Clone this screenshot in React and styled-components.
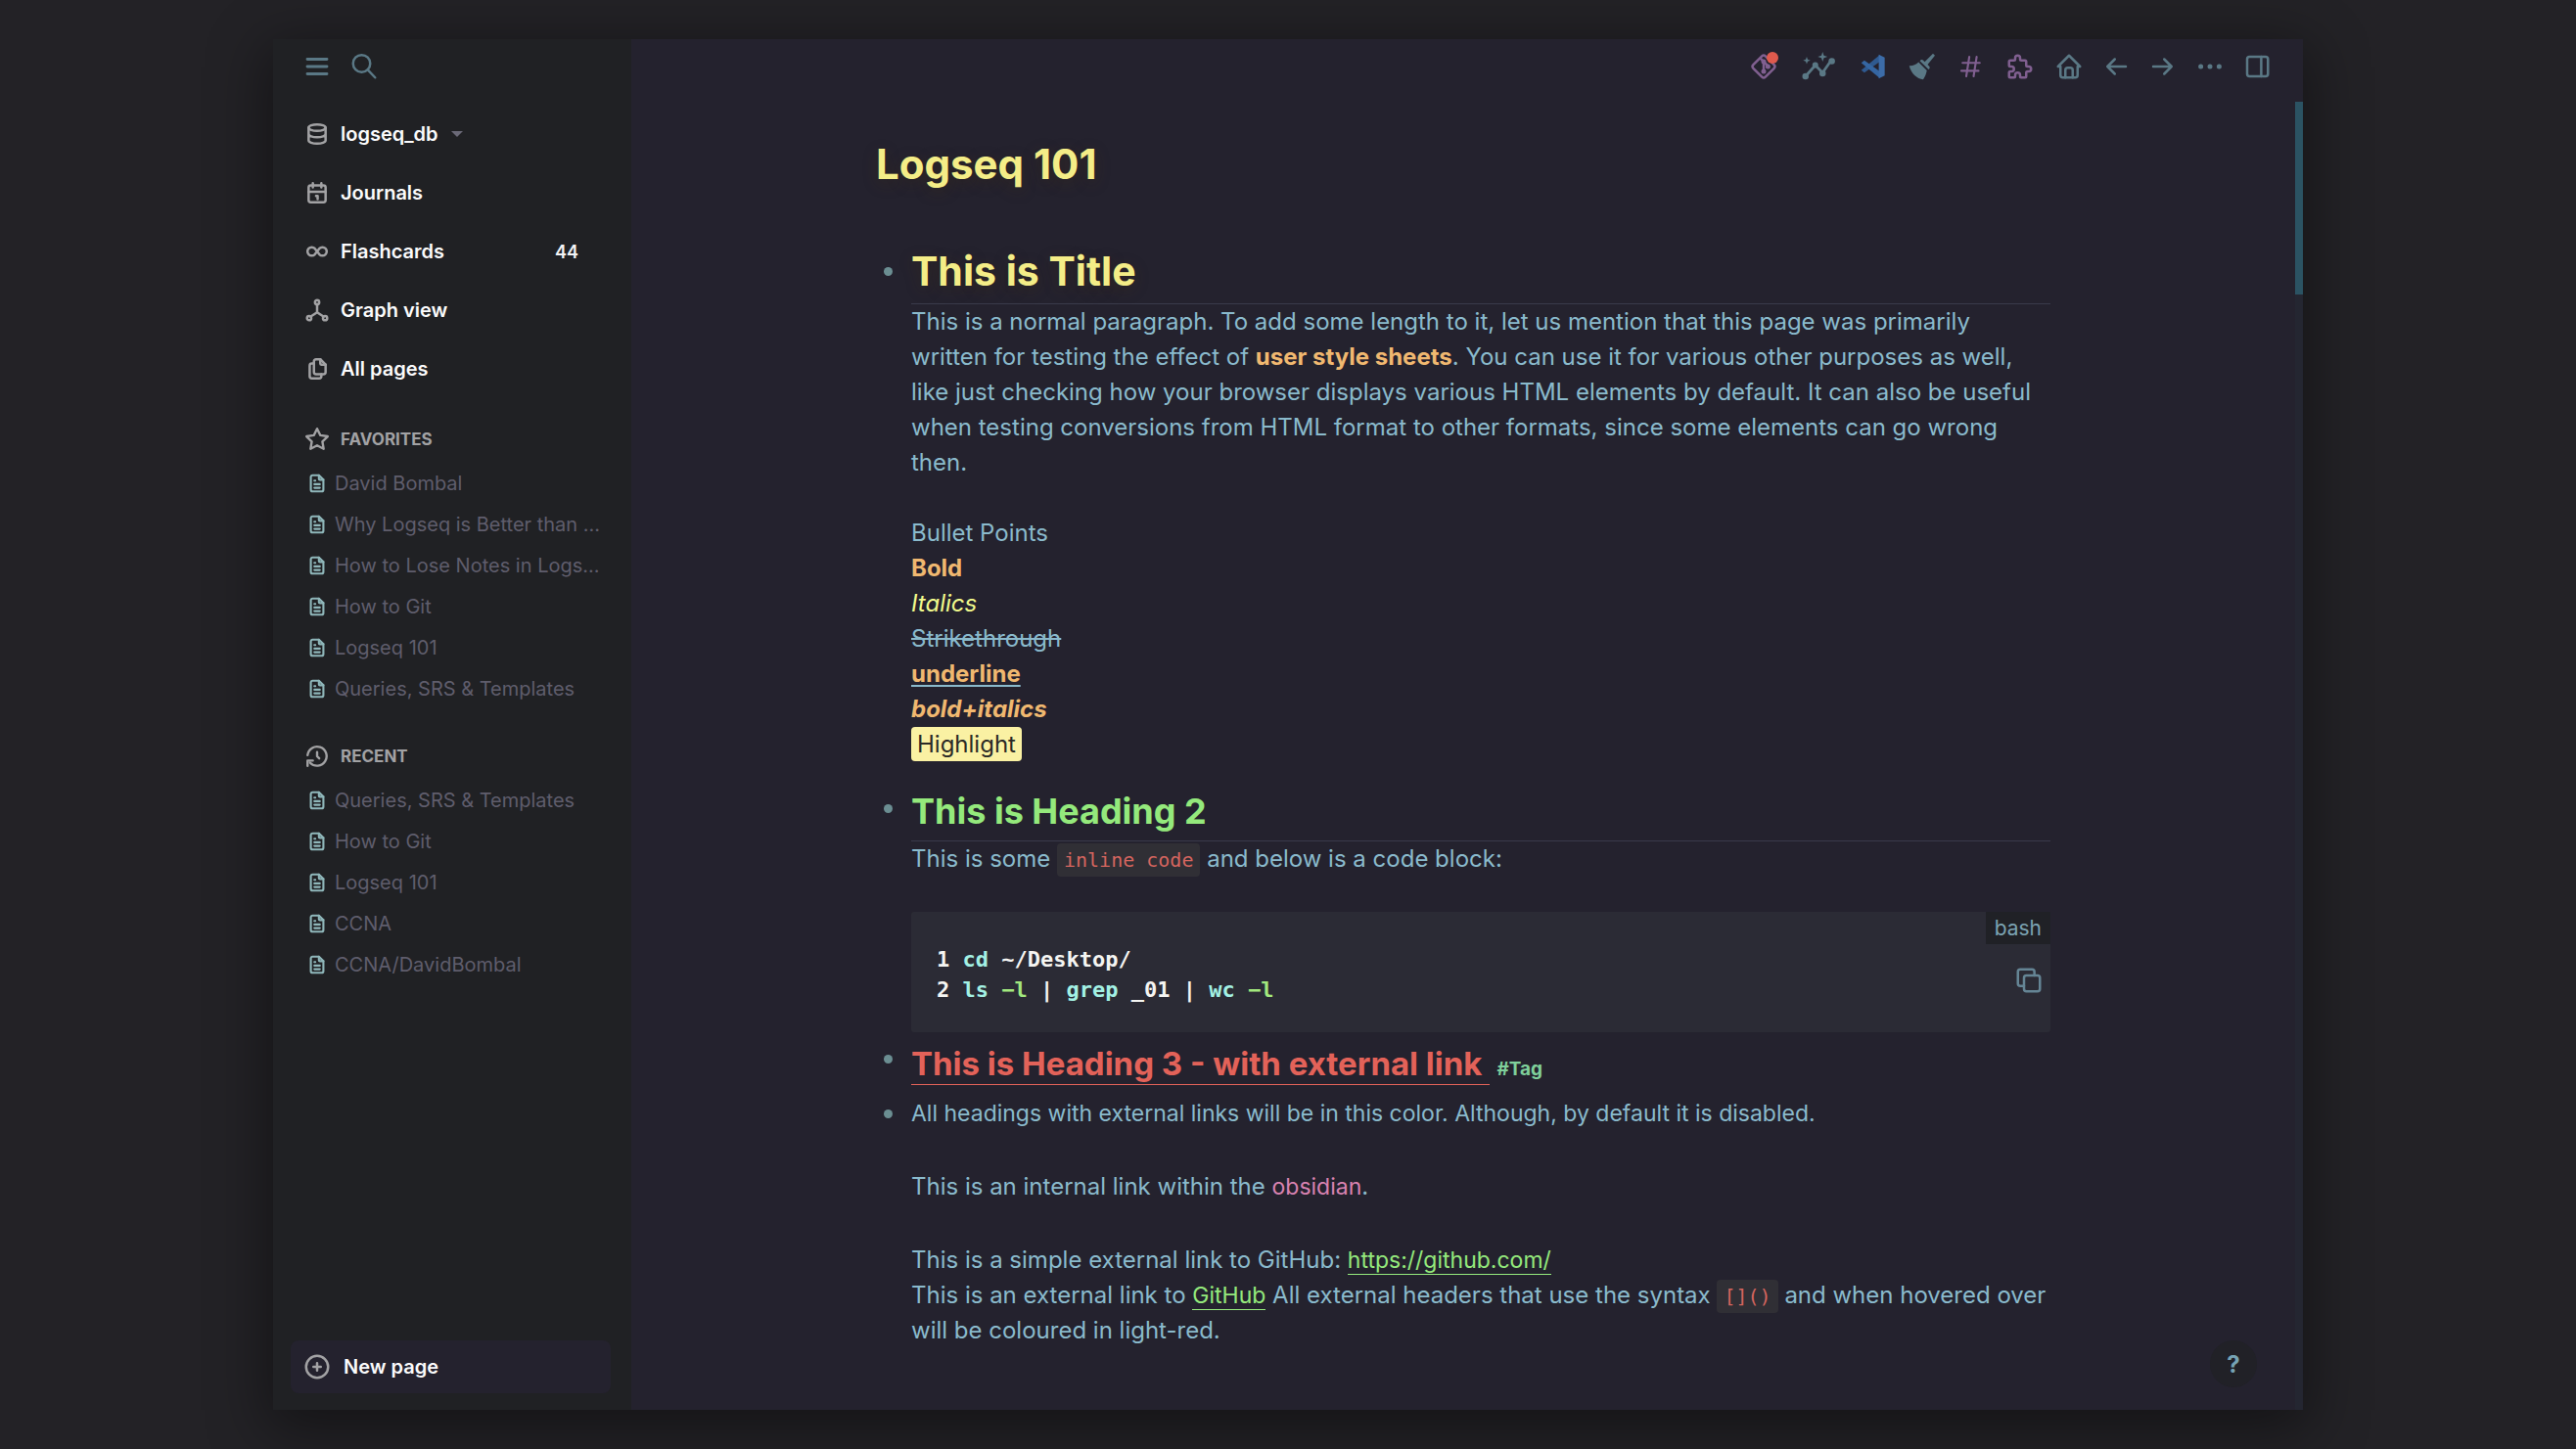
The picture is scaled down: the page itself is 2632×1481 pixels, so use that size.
import React from 'react';
import styled, { createGlobalStyle, css } from 'styled-components';

const c = {
  desk: '#232226',
  side: '#202124',
  main: '#24222e',
  text: '#8abacc',
  icon: '#5a7885',
  purple: '#805f90',
  muted: '#5f5d6c',
  grey: '#a2a2a4',
  yellow: '#f4ed87',
  orange: '#f0b870',
  green: '#94e97c',
  red: '#e36259',
};

const sans = `Inter, 'Liberation Sans', sans-serif`;
const mono = `'DejaVu Sans Mono', 'Liberation Mono', monospace`;

const Global = createGlobalStyle`
  *, *::before, *::after { box-sizing: border-box; }
  body { margin: 0; background: ${c.desk}; font-family: ${sans}; color: ${c.text}; }
  button { font: inherit; color: inherit; background: none; border: 0; padding: 0; cursor: pointer; }
  a { color: inherit; text-decoration: none; }
  h1, h2, h3, p, ul, pre { margin: 0; padding: 0; }
  ul { list-style: none; }
`;

const Desk = styled.div`
  min-height: 100vh;
  display: flex;
  padding: 40px 279px;
`;

const Window = styled.div`
  flex: 1;
  min-width: 0;
  display: flex;
  background: ${c.main};
  box-shadow: 0 14px 56px 6px rgba(0, 0, 0, 0.42);
`;

/* ---------- icons ---------- */

const Svg = styled.svg`
  display: block;
  flex: none;
  width: ${(p) => p.$w || p.$size}px;
  height: ${(p) => p.$size}px;
  fill: none;
  stroke: currentColor;
  stroke-width: ${(p) => p.$stroke || 2};
  stroke-linecap: round;
  stroke-linejoin: round;
`;

const shapes = {
  menu: <path d="M4 6h16M4 12h16M4 18h16" />,
  search: <><circle cx="10" cy="9.5" r="7" /><path d="M21 21l-6-6.300" /></>,
  database: <><ellipse cx="12" cy="6" rx="8" ry="3" /><path d="M4 6v6c0 1.660 3.600 3 8 3s8-1.340 8-3V6M4 12v6c0 1.660 3.600 3 8 3s8-1.340 8-3v-6" /></>,
  calendar: <><rect x="4" y="5" width="16" height="16" rx="2" /><path d="M16 3v4M8 3v4M4 11h16M11 15h1.500v3" /></>,
  infinity: <path d="M9.800 9.200a4 4 0 1 0 0 5.600L12 12l2.200-2.800a4 4 0 1 1 0 5.600L12 12 9.800 9.200" />,
  graph: <><circle cx="12" cy="4.500" r="2" /><circle cx="4.500" cy="19.500" r="2" /><circle cx="19.500" cy="19.500" r="2" /><path d="M6 18l6-4 6 4M12 6.500V14" /></>,
  files: <><path d="M15 3v4a1 1 0 0 0 1 1h4" /><path d="M18 17h-7a2 2 0 0 1-2-2V5a2 2 0 0 1 2-2h4l5 5v7a2 2 0 0 1-2 2z" /><path d="M16 17v2a2 2 0 0 1-2 2H7a2 2 0 0 1-2-2V9a2 2 0 0 1 2-2h2" /></>,
  star: <path d="M12 17.750l-6.172 3.245 1.179-6.873-5-4.867 6.900-1L11.993 2l3.086 6.253 6.900 1-5 4.867 1.179 6.873z" />,
  history: <><path d="M12 8v4l2 2" /><path d="M3 11a9 9 0 1 1 2.500 7.200M3 21v-5h5" /></>,
  file: <><path d="M14 3v4a1 1 0 0 0 1 1h4" /><path d="M17 21H7a2 2 0 0 1-2-2V5a2 2 0 0 1 2-2h7l5 5v11a2 2 0 0 1-2 2zM9 9h1M9 13h6M9 17h6" /></>,
  plus: <><circle cx="12" cy="12" r="9" /><path d="M9 12h6M12 9v6" /></>,
  git: (
    <>
      <rect x="5" y="5" width="14" height="14" rx="2" transform="rotate(45 12 12)" />
      <path d="M12 8v8M9.500 5.500L12 8l3.500 3.500" />
      <circle cx="12" cy="8" r="1" /><circle cx="12" cy="16" r="1" /><circle cx="15.500" cy="12" r="1" />
    </>
  ),
  insights: (
    <>
      <path d="M3 20l8-9 6 6 7-10" strokeWidth="2.2" />
      <g fill="currentColor" stroke="none">
        <circle cx="3" cy="20" r="2.600" /><circle cx="11" cy="10.800" r="2.400" />
        <circle cx="17" cy="17.500" r="2.600" /><circle cx="24.500" cy="7.500" r="2.600" />
        <path d="M17 0l1 3 3 1-3 1-1 3-1-3-3-1 3-1zM4 4l.8 2.200L7 7l-2.200.8L4 10l-.8-2.200L1 7l2.200-.8z" />
      </g>
    </>
  ),
  vscode: (
    <g stroke="none">
      <path fill="#2f5a90" d="M17.500 2v6L4.200 17.300 1.500 15.200z" />
      <path fill="#3566a2" d="M17.500 22v-6L4.200 6.700 1.500 8.800z" />
      <path fill="#3c6ca8" d="M16.800 1.500L22 4v16l-5.200 2.500z" />
    </g>
  ),
  broom: (
    <g fill="currentColor" stroke="none">
      <path d="M20.800 1.400l1.600 1.500-6 7.500 1.300 1.300c.6.600.6 1.400.1 2l-.6.700-7.200-7 .7-.7c.6-.5 1.400-.5 2 .1l1.300 1.300z" />
      <path d="M9 8.400l6.800 6.800c-.6 3-1.400 5-3 7.400-5-.5-10-5-11.400-11.200 3 .2 5.200-.8 7.600-3z" />
    </g>
  ),
  hash: <path d="M5 9h14M4 15.500h14M10.500 4L8 20M16.500 4L14 20" strokeWidth="1.700" />,
  puzzle: <path d="M4 7h3a1 1 0 0 0 1-1V5a2 2 0 0 1 4 0v1a1 1 0 0 0 1 1h3a1 1 0 0 1 1 1v3a1 1 0 0 0 1 1h1a2 2 0 0 1 0 4h-1a1 1 0 0 0-1 1v3a1 1 0 0 1-1 1h-3a1 1 0 0 1-1-1v-1a2 2 0 0 0-4 0v1a1 1 0 0 1-1 1H4a1 1 0 0 1-1-1v-3a1 1 0 0 1 1-1h1a2 2 0 0 0 0-4H4a1 1 0 0 1-1-1V8a1 1 0 0 1 1-1" />,
  home: <><path d="M5 12H3l9-9 9 9h-2v7a2 2 0 0 1-2 2H7a2 2 0 0 1-2-2v-7" /><path d="M9 21v-6a2 2 0 0 1 2-2h2a2 2 0 0 1 2 2v6" /></>,
  left: <path d="M5 12h15M5 12l6 6M5 12l6-6" />,
  right: <path d="M4 12h15M13 18l6-6M13 6l6 6" />,
  dots: <g fill="currentColor" strokeWidth="2"><circle cx="4.500" cy="12" r="1" /><circle cx="12" cy="12" r="1" /><circle cx="19.500" cy="12" r="1" /></g>,
  panel: <><rect x="4" y="4" width="17" height="16" rx="2" /><path d="M15.500 4v16" /></>,
  copy: <><rect x="8" y="8" width="13" height="13" rx="2" /><path d="M16.500 8V5a2 2 0 0 0-2-2H5a2 2 0 0 0-2 2v9.500a2 2 0 0 0 2 2h3" /></>,
};

function Icon({ name, size = 30, width, stroke }) {
  return (
    <Svg $size={size} $w={width} $stroke={stroke} viewBox={width ? '0 0 28 24' : '0 0 24 24'} aria-hidden="true">
      {shapes[name]}
    </Svg>
  );
}

/* ---------- sidebar ---------- */

const Sidebar = styled.aside`
  flex: none;
  width: 366px;
  display: flex;
  flex-direction: column;
  background: ${c.side};
`;

const SideTools = styled.div`
  display: flex;
  align-items: center;
  gap: 18px;
  height: 56px;
  margin-bottom: 11px;
  padding: 0 30px;
  color: ${c.icon};
`;

const Nav = styled.nav`
  margin-bottom: 18px;
`;

const NavRow = styled.button`
  display: flex;
  align-items: center;
  gap: 11px;
  width: 100%;
  height: 60px;
  padding: 0 54px 0 32px;
  color: ${c.grey};
  text-align: left;
`;

const NavLabel = styled.span`
  color: #fbfbfc;
  font-size: 20px;
  font-weight: 600;
`;

const Caret = styled.span`
  margin-left: 2px;
  border: 6px solid transparent;
  border-top-color: #6a6977;
  border-bottom: 0;
`;

const Count = styled.span`
  margin-left: auto;
  color: #f4f4f5;
  font-size: 18px;
  font-weight: 600;
`;

const Sections = styled.div`
  display: flex;
  flex-direction: column;
  gap: 24px;
`;

const SectionHead = styled.h2`
  display: flex;
  align-items: center;
  gap: 11px;
  height: 48px;
  padding-left: 32px;
  color: ${c.grey};
  font-size: 17px;
  font-weight: 700;
`;

const PageLink = styled.a`
  display: flex;
  align-items: center;
  gap: 7px;
  height: 42px;
  padding: 0 30px 0 34px;
  color: #8fb7ba;
  white-space: nowrap;

  span {
    color: ${c.muted};
    font-size: 20px;
  }
`;

const NewPage = styled.button`
  display: flex;
  align-items: center;
  gap: 12px;
  height: 54px;
  margin: auto 21px 17px 18px;
  padding: 0 12px;
  border-radius: 8px;
  background: ${c.main};
  color: ${c.grey};
`;

/* ---------- main column ---------- */

const Main = styled.main`
  position: relative;
  flex: 1;
  min-width: 0;
  display: flex;
  flex-direction: column;
`;

const TopBar = styled.header`
  display: flex;
  align-items: center;
  justify-content: flex-end;
  gap: 20px;
  height: 56px;
  margin-bottom: 8px;
  padding-right: 32px;
  color: ${c.icon};
`;

const Tools = styled.div`
  display: flex;
  align-items: center;
  gap: ${(p) => p.$gap}px;
`;

const Tool = styled.button`
  position: relative;
  display: flex;
  justify-content: center;
  width: ${(p) => p.$width || 30}px;
  color: ${(p) => p.$color || 'inherit'};
`;

const Dot = styled.span`
  position: absolute;
  top: 0;
  right: 0;
  width: 12px;
  height: 12px;
  border-radius: 50%;
  background: #df5a4d;
`;

const Scroller = styled.div`
  flex: 1;
  display: flex;
`;

const Track = styled.div`
  flex: none;
  width: 8px;
  background: #242631;
`;

const Thumb = styled.div`
  height: 197px;
  background: #2b5363;
`;

const Column = styled.div`
  flex: 1;
  min-width: 0;
  padding: 39px 0 40px;
`;

const Page = styled.article`
  width: 100%;
  max-width: 1200px;
  margin: 0 auto;
`;

const glow = css`
  text-shadow: 0 4px 16px rgba(80, 50, 10, 0.3);
`;

const PageTitle = styled.h1`
  margin-bottom: 59px;
  color: ${c.yellow};
  font-size: 42px;
  line-height: 50px;
  font-weight: 700;
  ${glow}
`;

const Block = styled.section`
  display: flex;
  gap: 12px;
  margin-top: ${(p) => p.$top || 0}px;
`;

const BulletCell = styled.div`
  flex: none;
  display: flex;
  align-items: center;
  justify-content: center;
  width: 24px;
  height: ${(p) => p.$line}px;

  &::before {
    content: '';
    width: 9px;
    height: 9px;
    border-radius: 50%;
    background: #6b8e92;
  }
`;

const Body = styled.div`
  flex: 1;
  min-width: 0;
  font-size: 24px;
  line-height: 36px;
`;

const H1 = styled.h1`
  padding-bottom: 8px;
  border-bottom: 1px solid #3a3a4a;
  color: ${c.yellow};
  font-size: 41px;
  line-height: 50px;
  font-weight: 700;
  ${glow}
`;

const H2 = styled.h2`
  padding-bottom: 7px;
  border-bottom: 1px solid #3a3a4a;
  color: ${c.green};
  font-size: 36px;
  line-height: 46px;
  font-weight: 700;
`;

const H3 = styled.h3`
  display: flex;
  align-items: baseline;
  gap: 7px;
  color: ${c.red};
  font-size: 33px;
  line-height: 42px;
  font-weight: 700;
`;

const HeadingLink = styled.a`
  padding-right: 8px;
  border-bottom: 1px solid ${c.red};
`;

const Tag = styled.a`
  color: #7fd09b;
  font-size: 19px;
  line-height: 1;
`;

const Para = styled.p`
  margin-top: ${(p) => p.$gap || 0}px;
  font-size: ${(p) => (p.$small ? 23 : 24)}px;
`;

const Strong = styled.strong`
  color: ${c.orange};
  font-weight: 700;
`;

const Em = styled.em`
  color: #f1fa8c;
`;

const Strike = styled.del`
  text-decoration-thickness: 2px;
`;

const Under = styled.u`
  text-decoration-thickness: 2px;
  text-underline-offset: 3px;
`;

const Mark = styled.mark`
  padding: 3px 6px;
  border-radius: 4px;
  background: #faf1a3;
  color: #2b2a26;
`;

const Code = styled.code`
  padding: 5px 7px;
  border-radius: 4px;
  background: #302f35;
  color: #d5655f;
  font-family: ${mono};
  font-size: 20px;
  line-height: 1;
`;

const InnerLink = styled.a`
  color: #d982b1;
  font-size: 23px;
  line-height: 1;
`;

const OuterLink = styled.a`
  border-bottom: 1px solid ${c.green};
  color: ${c.green};
  font-size: 23px;
  line-height: 1;
`;

const CodeBlock = styled.figure`
  position: relative;
  margin: 36px 0 0;
  padding: 33px 26px 28px;
  border-radius: 3px;
  background: #2b2b35;
`;

const Pre = styled.pre`
  color: #f5f5f2;
  font-family: ${mono};
  font-size: 22px;
  line-height: 31px;
  font-weight: 700;
`;

const Tok = styled.span`
  color: ${(p) => (p.$flag ? '#a2e87e' : '#a3f1e4')};
`;

const Lang = styled.figcaption`
  position: absolute;
  top: 0;
  right: 0;
  padding: 0 9px;
  background: #202126;
  color: #7ba3b2;
  font-size: 21px;
  line-height: 33px;
`;

const Copy = styled.button`
  position: absolute;
  top: 55px;
  right: 7px;
  color: #658595;
`;

const Help = styled.button`
  position: absolute;
  right: 47px;
  bottom: 23px;
  width: 48px;
  height: 48px;
  border-radius: 50%;
  background: #212127;
  color: #76a3b4;
  font-size: 24px;
  font-weight: 700;
`;

const nav = [
  { icon: 'database', label: 'logseq_db', caret: true },
  { icon: 'calendar', label: 'Journals' },
  { icon: 'infinity', label: 'Flashcards', count: 44 },
  { icon: 'graph', label: 'Graph view' },
  { icon: 'files', label: 'All pages' },
];

const lists = [
  {
    icon: 'star',
    title: 'FAVORITES',
    pages: ['David Bombal', 'Why Logseq is Better than …', 'How to Lose Notes in Logs…', 'How to Git', 'Logseq 101', 'Queries, SRS & Templates'],
  },
  {
    icon: 'history',
    title: 'RECENT',
    pages: ['Queries, SRS & Templates', 'How to Git', 'Logseq 101', 'CCNA', 'CCNA/DavidBombal'],
  },
];

export default function App() {
  return (
    <Desk>
      <Global />
      <Window>
        <Sidebar>
          <SideTools>
            <Tool aria-label="Toggle sidebar"><Icon name="menu" stroke={2.3} /></Tool>
            <Tool aria-label="Search"><Icon name="search" /></Tool>
          </SideTools>
          <Nav>
            {nav.map((n) => (
              <NavRow key={n.label}>
                <Icon name={n.icon} size={26} stroke={2.3} />
                <NavLabel>{n.label}</NavLabel>
                {n.caret && <Caret />}
                {n.count && <Count>{n.count}</Count>}
              </NavRow>
            ))}
          </Nav>
          <Sections>
            {lists.map((l) => (
              <section key={l.title}>
                <SectionHead><Icon name={l.icon} size={26} stroke={2.2} />{l.title}</SectionHead>
                <ul>
                  {l.pages.map((p) => (
                    <li key={p}><PageLink href="#"><Icon name="file" size={22} stroke={2.3} /><span>{p}</span></PageLink></li>
                  ))}
                </ul>
              </section>
            ))}
          </Sections>
          <NewPage><Icon name="plus" /><NavLabel>New page</NavLabel></NewPage>
        </Sidebar>

        <Main>
          <TopBar>
            <Tools $gap={20}>
              <Tool aria-label="Git" $color={c.purple}><Icon name="git" /><Dot /></Tool>
              <Tool aria-label="Insights" $width={42}><Icon name="insights" width={35} /></Tool>
              <Tool aria-label="Open in VS Code"><Icon name="vscode" size={28} /></Tool>
              <Tool aria-label="Clean up"><Icon name="broom" /></Tool>
              <Tool aria-label="Tags" $color={c.purple}><Icon name="hash" /></Tool>
              <Tool aria-label="Plugins" $color={c.purple}><Icon name="puzzle" /></Tool>
            </Tools>
            <Tools $gap={18}>
              <Tool aria-label="Home"><Icon name="home" /></Tool>
              <Tool aria-label="Back"><Icon name="left" /></Tool>
              <Tool aria-label="Forward"><Icon name="right" /></Tool>
              <Tool aria-label="More"><Icon name="dots" /></Tool>
              <Tool aria-label="Toggle right panel"><Icon name="panel" /></Tool>
            </Tools>
          </TopBar>

          <Scroller>
            <Column>
              <Page>
                <PageTitle>Logseq 101</PageTitle>

                <Block>
                  <BulletCell $line={50} />
                  <Body>
                    <H1>This is Title</H1>
                    <Para>
                      This is a normal paragraph. To add some length to it, let us mention that this page was primarily
                      written for testing the effect of <Strong>user style sheets</Strong>. You can use it for various
                      other purposes as well, like just checking how your browser displays various HTML elements by
                      default. It can also be useful when testing conversions from HTML format to other formats, since
                      some elements can go wrong then.
                    </Para>
                    <Para $gap={36}>
                      Bullet Points<br />
                      <Strong>Bold</Strong><br />
                      <Em>Italics</Em><br />
                      <Strike>Strikethrough</Strike><br />
                      <Under><Strong>underline</Strong></Under><br />
                      <Strong as="em">bold+italics</Strong><br />
                      <Mark>Highlight</Mark>
                    </Para>
                  </Body>
                </Block>

                <Block $top={27}>
                  <BulletCell $line={40} />
                  <Body>
                    <H2>This is Heading 2</H2>
                    <Para>This is some <Code>inline code</Code> and below is a code block:</Para>
                    <CodeBlock>
                      <Lang>bash</Lang>
                      <Pre>
                        1 <Tok>cd</Tok> ~/Desktop/{'\n'}
                        2 <Tok>ls</Tok> <Tok $flag>−l</Tok> | <Tok>grep</Tok> _01 | <Tok>wc</Tok> <Tok $flag>−l</Tok>
                      </Pre>
                      <Copy aria-label="Copy code"><Icon name="copy" /></Copy>
                    </CodeBlock>
                  </Body>
                </Block>

                <Block $top={11}>
                  <BulletCell $line={32} />
                  <Body>
                    <H3><HeadingLink href="#">This is Heading 3 - with external link</HeadingLink><Tag href="#">#Tag</Tag></H3>
                  </Body>
                </Block>

                <Block $top={11}>
                  <BulletCell $line={36} />
                  <Body>
                    <Para $small>All headings with external links will be in this color. Although, by default it is disabled.</Para>
                    <Para $gap={39}>This is an internal link within the <InnerLink href="#">obsidian</InnerLink>.</Para>
                    <Para $gap={39}>
                      This is a simple external link to GitHub: <OuterLink href="#">https://github.com/</OuterLink><br />
                      This is an external link to <OuterLink href="#">GitHub</OuterLink> All external headers that use
                      the syntax <Code>[]()</Code> and when hovered over will be coloured in light-red.
                    </Para>
                  </Body>
                </Block>
              </Page>
            </Column>
            <Track><Thumb /></Track>
          </Scroller>
          <Help aria-label="Help">?</Help>
        </Main>
      </Window>
    </Desk>
  );
}
